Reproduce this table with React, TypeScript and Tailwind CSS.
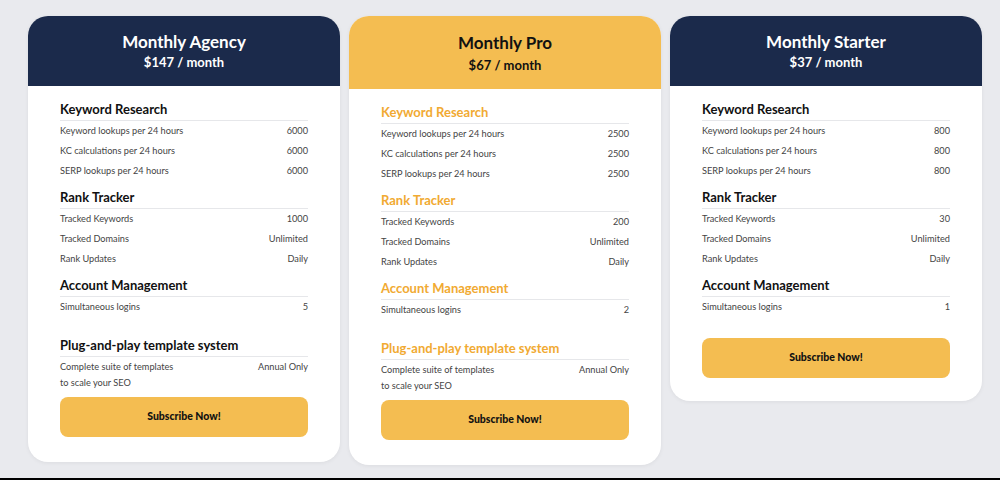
import React from 'react'

type Row = { label: string[]; value: string }
type Section = { title: string; rows: Row[]; className?: string }

interface Plan {
  name: string
  price: string
  featured: boolean
  sections: Section[]
  buttonClass: string
  bodyClass: string
}

const keywordRows = (v: string): Row[] => [
  { label: ['Keyword lookups per 24 hours'], value: v },
  { label: ['KC calculations per 24 hours'], value: v },
  { label: ['SERP lookups per 24 hours'], value: v },
]

const rankRows = (kw: string): Row[] => [
  { label: ['Tracked Keywords'], value: kw },
  { label: ['Tracked Domains'], value: 'Unlimited' },
  { label: ['Rank Updates'], value: 'Daily' },
]

const templateSection: Section = {
  title: 'Plug-and-play template system',
  rows: [{ label: ['Complete suite of templates', 'to scale your SEO'], value: 'Annual Only' }],
  className: 'mt-[20px]',
}

const plans: Plan[] = [
  {
    name: 'Monthly Agency',
    price: '$147 / month',
    featured: false,
    sections: [
      { title: 'Keyword Research', rows: keywordRows('6000') },
      { title: 'Rank Tracker', rows: rankRows('1000') },
      { title: 'Account Management', rows: [{ label: ['Simultaneous logins'], value: '5' }] },
      templateSection,
    ],
    buttonClass: 'mt-[4px]',
    bodyClass: 'pb-[25px]',
  },
  {
    name: 'Monthly Pro',
    price: '$67 / month',
    featured: true,
    sections: [
      { title: 'Keyword Research', rows: keywordRows('2500') },
      { title: 'Rank Tracker', rows: rankRows('200') },
      { title: 'Account Management', rows: [{ label: ['Simultaneous logins'], value: '2' }] },
      templateSection,
    ],
    buttonClass: 'mt-[4px]',
    bodyClass: 'pb-[25px]',
  },
  {
    name: 'Monthly Starter',
    price: '$37 / month',
    featured: false,
    sections: [
      { title: 'Keyword Research', rows: keywordRows('800') },
      { title: 'Rank Tracker', rows: rankRows('30') },
      { title: 'Account Management', rows: [{ label: ['Simultaneous logins'], value: '1' }] },
    ],
    buttonClass: 'mt-[21px]',
    bodyClass: 'pb-[23px]',
  },
]

function PlanCard({ plan }: { plan: Plan }) {
  return (
    <div className="w-[312px] shrink-0 overflow-hidden rounded-[20px] bg-white shadow-[0_1px_4px_rgba(0,0,0,0.06)]">
      {/* header */}
      {plan.featured ? (
        <div className="flex h-[73px] flex-col items-center justify-center bg-[#f4bd51] pt-[2px] text-[#111]">
          <div className="text-[17px] font-bold leading-[22px]">{plan.name}</div>
          <div className="mt-[1px] text-[13px] font-bold leading-[20px]">{plan.price}</div>
        </div>
      ) : (
        <div className="flex h-[70px] flex-col items-center justify-center bg-[#1b2a4b] text-white">
          <div className="text-[17px] font-bold leading-[22px]">{plan.name}</div>
          <div className="text-[13px] font-bold leading-[18px]">{plan.price}</div>
        </div>
      )}

      {/* body */}
      <div className={`px-[32px] pt-[15px] ${plan.bodyClass}`}>
        {plan.sections.map((s, i) => (
          <div key={s.title} className={i > 0 ? s.className ?? 'mt-[8px]' : ''}>
            <div
              className={`border-b border-[#e6e7ea] pb-[3px] text-[13px] font-bold leading-[16px] ${
                plan.featured ? 'text-[#f1aa32]' : 'text-[#111]'
              }`}
            >
              {s.title}
            </div>
            {s.rows.map((r) => (
              <div key={r.label[0]} className="flex justify-between py-[2px] text-[9.2px] leading-[16px] text-[#444]">
                <div>
                  {r.label.map((l) => (
                    <div key={l}>{l}</div>
                  ))}
                </div>
                <div>{r.value}</div>
              </div>
            ))}
          </div>
        ))}

        <button
          className={`flex h-[40px] w-full items-center justify-center rounded-[8px] bg-[#f4bd51] text-[10.5px] font-black text-[#111] ${plan.buttonClass}`}
        >
          Subscribe Now!
        </button>
      </div>
    </div>
  )
}

export default function App() {
  return (
    <div className="flex h-[480px] flex-col bg-[#e9eaee]" style={{ fontFamily: 'Lato, "Liberation Sans", sans-serif' }}>
      <div className="flex flex-1 items-start gap-[9px] pl-[28px] pt-[16px]">
        {plans.map((p) => (
          <PlanCard key={p.name} plan={p} />
        ))}
      </div>
      <div className="h-[2px] bg-black" />
    </div>
  )
}
